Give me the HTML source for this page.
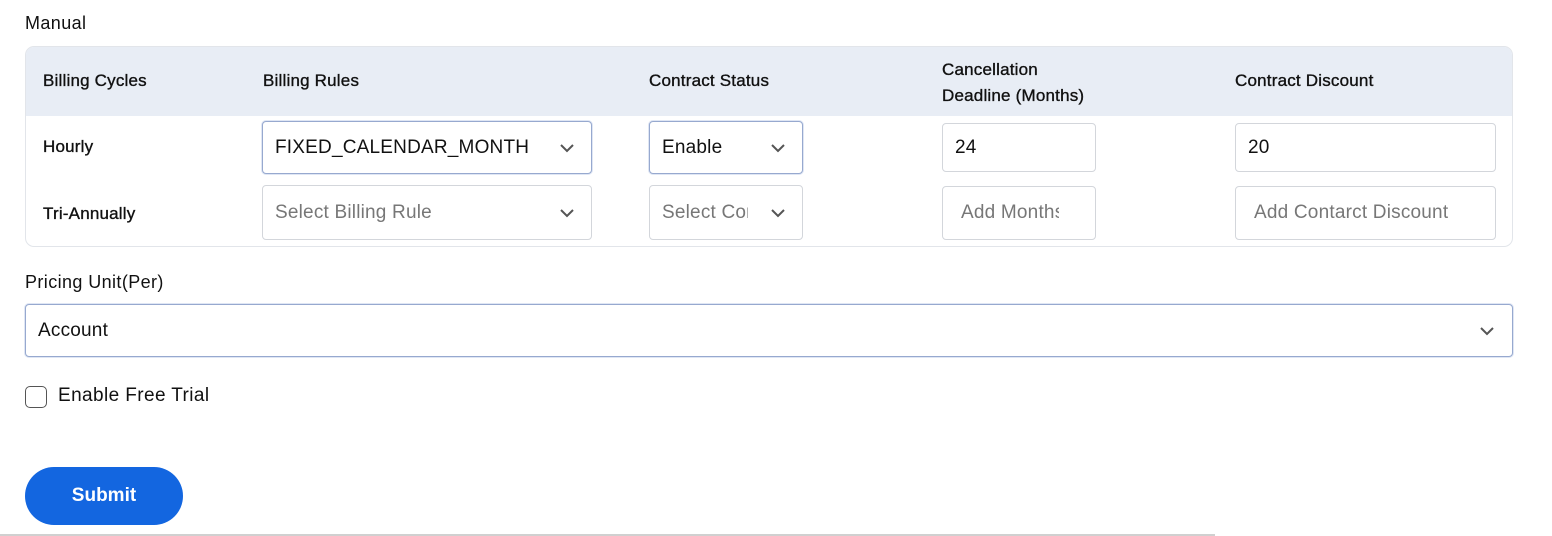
<!DOCTYPE html>
<html><head><style>
*{box-sizing:border-box;margin:0;padding:0}
body{width:1552px;height:536px;background:#fff;font-family:"Liberation Sans",sans-serif;color:#111;position:relative;overflow:hidden}
.a{position:absolute}
.t{font-size:18px;white-space:nowrap;letter-spacing:0.4px}
.h{font-size:17px;white-space:nowrap;-webkit-text-stroke:0.35px #111;letter-spacing:0.2px;color:#111}
.box{position:absolute;border:1px solid #d3d6db;border-radius:4px;background:#fff;font-size:19px;padding-left:12px;display:flex;align-items:center;white-space:nowrap;overflow:hidden;letter-spacing:0.2px}
.act{border:1.5px solid #97a9cf;box-shadow:0 0 0 1px #dfe6f4}
.ph{color:#777}
.chev{position:absolute;right:16px;top:50%;margin-top:-5px}
</style></head><body>
<div class="a t" style="left:25px;top:13px">Manual</div>
<div class="a" style="left:25px;top:46px;width:1488px;height:201px;border:1px solid #e2e5ea;border-radius:9px;overflow:hidden">
 <div class="a" style="left:0;top:0;width:100%;height:69px;background:#e8edf5"></div>
</div>
<div class="a h" style="left:43px;top:71px">Billing Cycles</div>
<div class="a h" style="left:263px;top:71px">Billing Rules</div>
<div class="a h" style="left:649px;top:71px">Contract Status</div>
<div class="a h" style="left:942px;top:57px;line-height:26px">Cancellation<br>Deadline (Months)</div>
<div class="a h" style="left:1235px;top:71px">Contract Discount</div>

<div class="a h" style="left:43px;top:137px">Hourly</div>
<div class="a h" style="left:43px;top:204px">Tri-Annually</div>

<div class="box act" style="left:262px;top:121px;width:330px;height:53px">FIXED_CALENDAR_MONTH<svg class="chev" width="16" height="10" viewBox="0 0 16 10"><path d="M2 2l6 6 6-6" fill="none" stroke="#555" stroke-width="2"/></svg></div>
<div class="box act" style="left:649px;top:121px;width:154px;height:53px">Enable<svg class="chev" width="16" height="10" viewBox="0 0 16 10"><path d="M2 2l6 6 6-6" fill="none" stroke="#555" stroke-width="2"/></svg></div>
<div class="box" style="left:942px;top:123px;width:154px;height:49px">24</div>
<div class="box" style="left:1235px;top:123px;width:261px;height:49px">20</div>

<div class="box ph" style="left:262px;top:185px;width:330px;height:55px">Select Billing Rule<svg class="chev" width="16" height="10" viewBox="0 0 16 10"><path d="M2 2l6 6 6-6" fill="none" stroke="#555" stroke-width="2"/></svg></div>
<div class="box ph" style="left:649px;top:185px;width:154px;height:55px"><span style="display:inline-block;width:86px;overflow:hidden">Select Contract</span><svg class="chev" width="16" height="10" viewBox="0 0 16 10"><path d="M2 2l6 6 6-6" fill="none" stroke="#555" stroke-width="2"/></svg></div>
<div class="box ph" style="left:942px;top:186px;width:154px;height:54px;padding-left:18px"><span style="display:inline-block;width:98px;overflow:hidden">Add Months</span></div>
<div class="box ph" style="left:1235px;top:186px;width:261px;height:54px;padding-left:18px"><span style="display:inline-block;width:212px;overflow:hidden">Add Contarct Discount</span></div>

<div class="a t" style="left:25px;top:272px">Pricing Unit(Per)</div>
<div class="box act" style="left:25px;top:304px;width:1488px;height:53px">Account<svg class="chev" width="16" height="10" viewBox="0 0 16 10" style="right:17px"><path d="M2 2l6 6 6-6" fill="none" stroke="#555" stroke-width="2"/></svg></div>

<div class="a" style="left:25px;top:386px;width:22px;height:22px;border:1.5px solid #555;border-radius:5px"></div>
<div class="a t" style="left:58px;top:385px;font-size:19px">Enable Free Trial</div>

<div class="a" style="left:25px;top:467px;width:158px;height:58px;border-radius:29px;background:#1366e0;color:#fff;font-weight:bold;font-size:19px;display:flex;align-items:center;justify-content:center">Submit</div>
<div class="a" style="left:0;top:534px;width:1215px;height:2px;background:#d0d0d0"></div>
</body></html>
